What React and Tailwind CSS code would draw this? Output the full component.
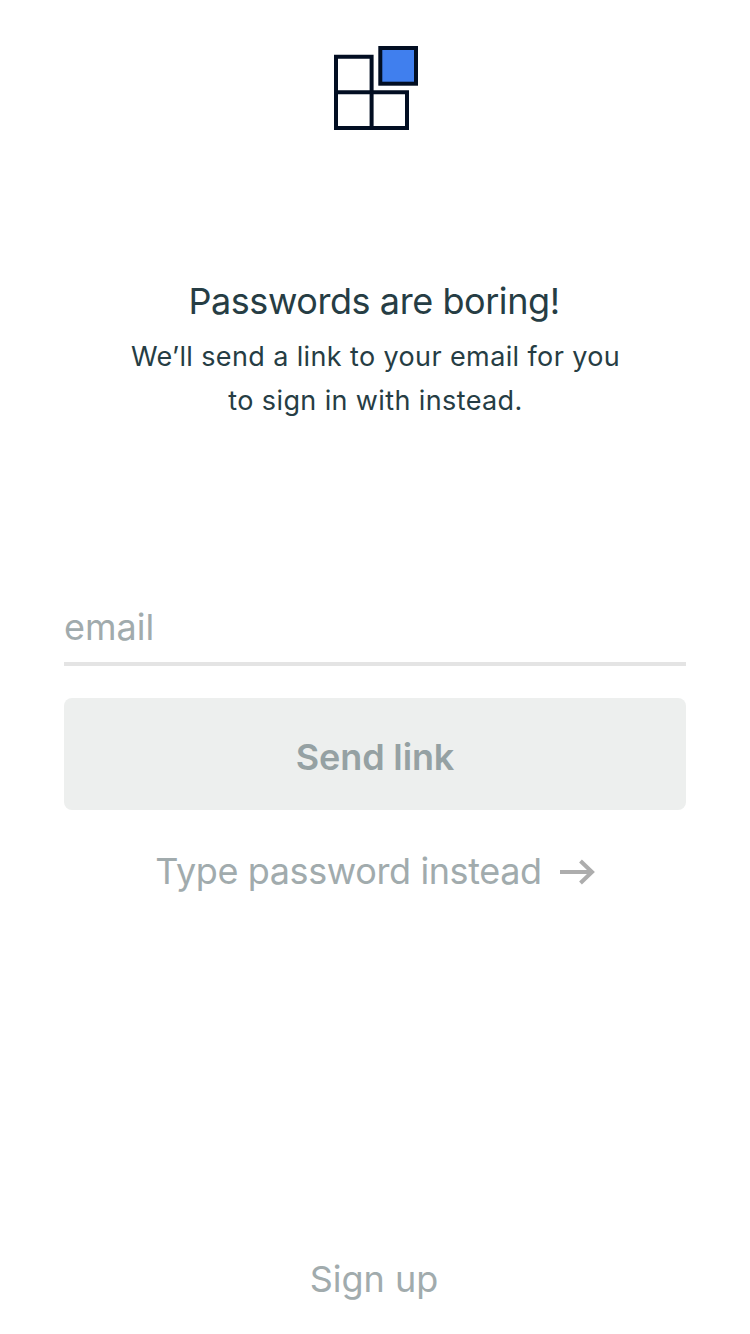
export default function App() {
  return (
    <main className="flex h-[1334px] w-[750px] flex-col items-center bg-white font-['Inter',sans-serif] text-[#263d44]">
      <svg className="mt-[46px] ml-[2px] h-[84px] w-[84px] shrink-0" viewBox="0 0 84 84" fill="none" stroke="#020e22" strokeWidth="4">
        <path d="M2 10.8H37.6V46.3H73V82H2ZM2 46.3H37.6V82" />
        <rect x="46.3" y="2" width="35.7" height="35.7" fill="#407fee" />
      </svg>
      <h1 className="mt-[147px] mr-[2px] h-[48px] text-[36px] leading-[48px] font-normal tracking-[-0.43px] whitespace-nowrap"><span>Passwords are boring!</span></h1>
      <p className="mt-[10px] ml-[1px] text-center text-[27px] leading-[44px] font-normal tracking-[0.38px] whitespace-nowrap"><span>We’ll send a link to your email for you</span><br /><span>to sign in with instead.</span></p>
      <form className="mt-[180px] flex w-[622px] flex-col">
        <label className="h-[63px] border-b-4 border-[#e4e4e4] text-[36px] leading-[48px] font-normal text-[#a1abad]"><span>email</span></label>
        <button type="button" className="mt-[32px] h-[112px] rounded-[8px] bg-[#edefee] pt-[5px] text-[36px] font-semibold tracking-[-0.15px] text-[#95a1a3]"><span>Send link</span></button>
      </form>
      <a className="mt-[37px] flex h-[48px] items-center gap-[18px] text-[36px] leading-[48px] tracking-[-0.39px] whitespace-nowrap text-[#a1abad]"><span>Type password instead</span>
        <svg className="mt-[2px] h-[28px] w-[35px]" viewBox="0 0 35 28" fill="none" stroke="#adadad" strokeWidth="4"><path d="M0 14H33M20.5 3L32 14L20.5 25" /></svg>
      </a>
      <a className="mt-[360px] mr-[2px] text-[36px] leading-[48px] text-[#a1abad]"><span>Sign up</span></a>
    </main>
  );
}
